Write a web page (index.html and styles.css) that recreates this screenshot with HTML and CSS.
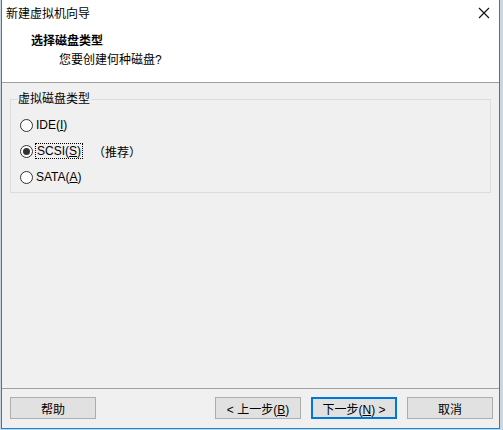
FILE: index.html
```html
<!DOCTYPE html>
<html lang="zh-CN">
<head>
  <meta charset="UTF-8" />
  <title>新建虚拟机向导</title>
  <link rel="stylesheet" href="styles.css">
</head>
<body>
  <div class="window">
    <div class="titlebar">
      <span class="title">新建虚拟机向导</span>
      <svg class="close" width="12" height="12" viewBox="0 0 12 12">
        <path d="M1 1 L11 11 M11 1 L1 11" stroke="#111" stroke-width="1.1" fill="none" />
      </svg>
    </div>

    <div class="header">
      <div class="header-title">选择磁盘类型</div>
      <div class="header-sub">您要创建何种磁盘?</div>
    </div>

    <div class="content">
      <fieldset class="group">
        <legend>虚拟磁盘类型</legend>
        <label class="option">
          <input type="radio" name="disk" />
          <span>IDE(<u>I</u>)</span>
        </label>
        <label class="option">
          <input type="radio" name="disk" checked />
          <span class="focus">SCSI(<u>S</u>)</span>
          <span class="hint">（推荐）</span>
        </label>
        <label class="option">
          <input type="radio" name="disk" />
          <span>SATA(<u>A</u>)</span>
        </label>
      </fieldset>
    </div>

    <div class="footer">
      <button class="btn">帮助</button>
      <div class="spacer"></div>
      <button class="btn">&lt; 上一步(<u>B</u>)</button>
      <button class="btn default">下一步(<u>N</u>) &gt;</button>
      <button class="btn">取消</button>
    </div>
  </div>
</body>
</html>
```

FILE: styles.css
```css
* {
  box-sizing: border-box;
}

body {
  margin: 0;
  padding: 0 0 0 1px;
  background: #c9d7e2;
  font-family: "Liberation Sans", "Noto Sans CJK SC", sans-serif;
  font-size: 12px;
  color: #000;
}

.window {
  width: 499px;
  height: 429px;
  border: 1px solid #1883d7;
  border-top: none;
  background: #f0f0f0;
  display: flex;
  flex-direction: column;
}

.titlebar {
  height: 27px;
  background: #fff;
  display: flex;
  align-items: center;
  padding: 0 8px 2px 4px;
}

.title {
  flex: 1;
  font-size: 12px;
}

.close {
  margin-right: 1px;
}

.header {
  height: 56px;
  background: #fff;
  border-bottom: 1px solid #a0a0a0;
  padding: 6px 0 0 29px;
}

.header-title {
  font-weight: bold;
  font-size: 12px;
  line-height: 16px;
}

.header-sub {
  margin-top: 3px;
  padding-left: 28px;
  line-height: 16px;
}

.content {
  flex: 1;
  padding: 9px 8px 0 8px;
}

.group {
  margin: 0;
  padding: 6px 0 4px 9px;
  border: 1px solid #dcdcdc;
  height: 101px;
}

.group legend {
  padding: 0 1px;
  margin-left: -3px;
  line-height: 14px;
}

.option {
  display: flex;
  align-items: center;
  height: 26px;
  gap: 3px;
}

.option input {
  appearance: none;
  width: 13px;
  height: 13px;
  margin: 0;
  border: 1px solid #333;
  border-radius: 50%;
  background: #fff;
  display: grid;
  place-items: center;
}

.option input:checked::after {
  content: "";
  width: 7px;
  height: 7px;
  border-radius: 50%;
  background: #333;
}

.focus {
  outline: 1px dotted #000;
  outline-offset: 0;
  padding: 0 1px;
}

.hint {
  margin-left: 8px;
}

.footer {
  height: 40px;
  border-top: 1px solid #a0a0a0;
  display: flex;
  align-items: flex-start;
  padding: 8px 6px 0 8px;
  gap: 10px;
}

.spacer {
  flex: 1;
}

.btn {
  width: 86px;
  height: 22px;
  background: #e1e1e1;
  border: 1px solid #adadad;
  font-family: inherit;
  font-size: 12px;
  padding: 0;
  margin: 0;
}

.btn.default {
  border: 2px solid #0078d7;
}
```
